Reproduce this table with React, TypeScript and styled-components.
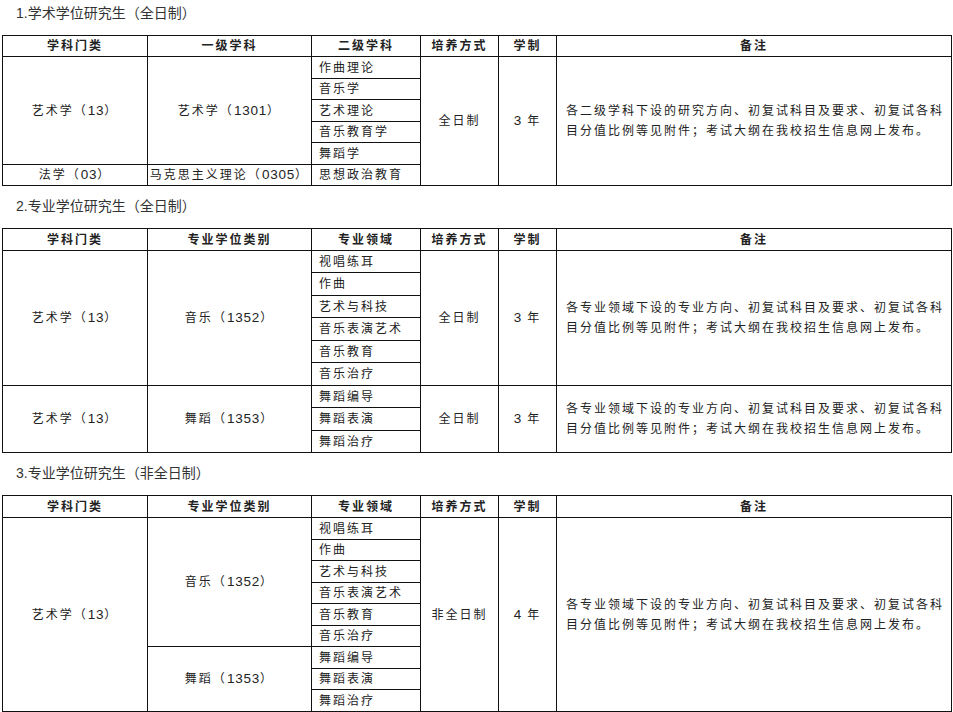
import React from 'react';
import styled, { createGlobalStyle } from 'styled-components';

const GlobalStyle = createGlobalStyle`
  html, body {
    margin: 0;
    padding: 0;
    background: #fff;
  }
  body {
    font-family: 'Liberation Sans', 'Noto Sans CJK SC', sans-serif;
    color: #222;
  }
`;

const Page = styled.div`
  width: 953px;
  padding: 2px 0 0 2px;
  box-sizing: border-box;
`;

const Section = styled.section`
  & + & {
    margin-top: 9px;
  }
`;

const Title = styled.h2`
  margin: 0 0 11px 14px;
  font-family: 'Liberation Sans', 'Noto Sans CJK SC', sans-serif;
  font-size: 14px;
  font-weight: 400;
  line-height: 22px;
  color: #333;
`;

// odd / even body rows alternate by one pixel to reach the fractional row pitch of the print
const Sheet = styled.table<{ $odd: number; $even: number }>`
  width: 949px;
  table-layout: fixed;
  border-collapse: collapse;
  font-family: 'Liberation Sans', 'Noto Sans CJK SC', sans-serif;
  font-size: 12px;
  letter-spacing: 2px;
  color: #222;

  tbody tr:nth-child(odd) {
    height: ${({ $odd }) => $odd}px;
  }
  tbody tr:nth-child(even) {
    height: ${({ $even }) => $even}px;
  }
`;

const HeadRow = styled.tr<{ $h: number }>`
  height: ${({ $h }) => $h}px;
`;

const Th = styled.th`
  border: 1px solid #111;
  padding: 0;
  font-weight: 700;
  text-align: center;
  vertical-align: middle;
  line-height: 16px;
`;

const Td = styled.td<{ $align?: 'left' | 'center' }>`
  border: 1px solid #111;
  padding: ${({ $align }) => ($align === 'left' ? '0 4px 0 7px' : '0')};
  text-align: ${({ $align }) => $align || 'center'};
  vertical-align: middle;
  line-height: 16px;
  white-space: nowrap;
  overflow: hidden;
`;

const Remark = styled.td`
  border: 1px solid #111;
  padding: 0 4px 0 9px;
  text-align: left;
  vertical-align: middle;
  line-height: 20px;
  white-space: nowrap;
`;

const Line = styled.span`
  display: block;
`;

const Num = styled.span`
  font-size: 13.5px;
  letter-spacing: 0.8px;
`;

const COLS = [145, 164, 109, 78, 58, 395];

const Cols = () => (
  <colgroup>
    {COLS.map((w, i) => (
      <col key={i} style={{ width: w }} />
    ))}
  </colgroup>
);

const Head = ({ labels, h }: { labels: string[]; h: number }) => (
  <thead>
    <HeadRow $h={h}>
      {labels.map((l) => (
        <Th key={l}>{l}</Th>
      ))}
    </HeadRow>
  </thead>
);

const RemarkText = ({ first }: { first: string }) => (
  <>
    <Line>{first}</Line>
    <Line>目分值比例等见附件；考试大纲在我校招生信息网上发布。</Line>
  </>
);

const PRO_HEAD = ['学科门类', '专业学位类别', '专业领域', '培养方式', '学制', '备注'];
const MUSIC = ['视唱练耳', '作曲', '艺术与科技', '音乐表演艺术', '音乐教育', '音乐治疗'];
const DANCE = ['舞蹈编导', '舞蹈表演', '舞蹈治疗'];
const PRO_NOTE = '各专业领域下设的专业方向、初复试科目及要求、初复试各科';

const Academic = () => {
  const subs = ['作曲理论', '音乐学', '艺术理论', '音乐教育学', '舞蹈学'];
  return (
    <Sheet $odd={22} $even={21}>
      <Cols />
      <Head labels={['学科门类', '一级学科', '二级学科', '培养方式', '学制', '备注']} h={21} />
      <tbody>
        {subs.map((s, i) => (
          <tr key={s}>
            {i === 0 && (
              <>
                <Td rowSpan={5}>
                  艺术学（<Num>13</Num>）
                </Td>
                <Td rowSpan={5}>
                  艺术学（<Num>1301</Num>）
                </Td>
              </>
            )}
            <Td $align="left">{s}</Td>
            {i === 0 && (
              <>
                <Td rowSpan={6}>全日制</Td>
                <Td rowSpan={6}>
                  <Num>3</Num> 年
                </Td>
                <Remark rowSpan={6}>
                  <RemarkText first="各二级学科下设的研究方向、初复试科目及要求、初复试各科" />
                </Remark>
              </>
            )}
          </tr>
        ))}
        <tr>
          <Td>
            法学（<Num>03</Num>）
          </Td>
          <Td>
            马克思主义理论（<Num>0305</Num>）
          </Td>
          <Td $align="left">思想政治教育</Td>
        </tr>
      </tbody>
    </Sheet>
  );
};

const FullTime = () => {
  const groups = [
    { code: '1352', name: '音乐', list: MUSIC },
    { code: '1353', name: '舞蹈', list: DANCE },
  ];
  return (
    <Sheet $odd={22} $even={23}>
      <Cols />
      <Head labels={PRO_HEAD} h={22} />
      <tbody>
        {groups.map((g) =>
          g.list.map((s, i) => (
            <tr key={s}>
              {i === 0 && (
                <>
                  <Td rowSpan={g.list.length}>
                    艺术学（<Num>13</Num>）
                  </Td>
                  <Td rowSpan={g.list.length}>
                    {g.name}（<Num>{g.code}</Num>）
                  </Td>
                </>
              )}
              <Td $align="left">{s}</Td>
              {i === 0 && (
                <>
                  <Td rowSpan={g.list.length}>全日制</Td>
                  <Td rowSpan={g.list.length}>
                    <Num>3</Num> 年
                  </Td>
                  <Remark rowSpan={g.list.length}>
                    <RemarkText first={PRO_NOTE} />
                  </Remark>
                </>
              )}
            </tr>
          ))
        )}
      </tbody>
    </Sheet>
  );
};

const PartTime = () => {
  const all = [...MUSIC, ...DANCE];
  return (
    <Sheet $odd={22} $even={21}>
      <Cols />
      <Head labels={PRO_HEAD} h={22} />
      <tbody>
        {all.map((s, i) => (
          <tr key={s}>
            {i === 0 && (
              <Td rowSpan={all.length}>
                艺术学（<Num>13</Num>）
              </Td>
            )}
            {i === 0 && (
              <Td rowSpan={MUSIC.length}>
                音乐（<Num>1352</Num>）
              </Td>
            )}
            {i === MUSIC.length && (
              <Td rowSpan={DANCE.length}>
                舞蹈（<Num>1353</Num>）
              </Td>
            )}
            <Td $align="left">{s}</Td>
            {i === 0 && (
              <>
                <Td rowSpan={all.length}>非全日制</Td>
                <Td rowSpan={all.length}>
                  <Num>4</Num> 年
                </Td>
                <Remark rowSpan={all.length}>
                  <RemarkText first={PRO_NOTE} />
                </Remark>
              </>
            )}
          </tr>
        ))}
      </tbody>
    </Sheet>
  );
};

export default function App() {
  return (
    <>
      <GlobalStyle />
      <Page>
        <Section>
          <Title>1.学术学位研究生（全日制）</Title>
          <Academic />
        </Section>
        <Section>
          <Title>2.专业学位研究生（全日制）</Title>
          <FullTime />
        </Section>
        <Section>
          <Title>3.专业学位研究生（非全日制）</Title>
          <PartTime />
        </Section>
      </Page>
    </>
  );
}
